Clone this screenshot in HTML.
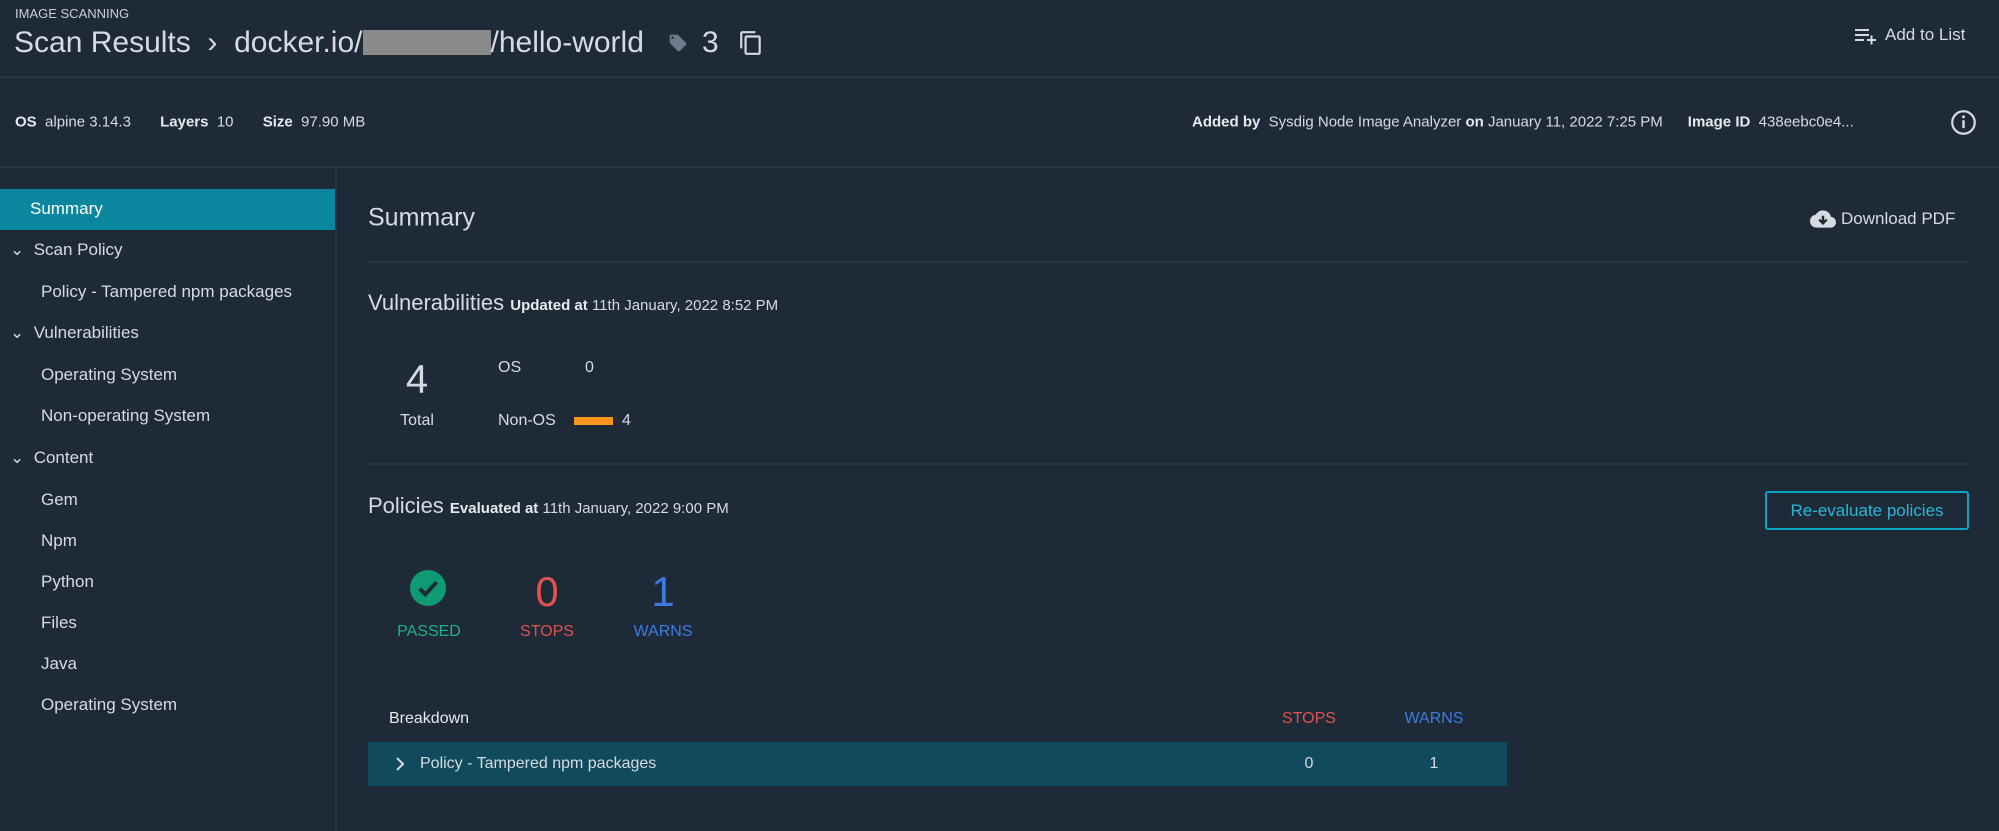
<!DOCTYPE html>
<html><head><meta charset="utf-8"><style>
*{margin:0;padding:0;box-sizing:border-box}
body{width:1999px;height:831px;background:#1f2a38;color:#d6dbe1;font-family:"Liberation Sans",sans-serif;position:relative;overflow:hidden}
.a{position:absolute;white-space:nowrap}
.line{position:absolute;height:2px;background:#283646}
b{font-weight:bold;color:#e6e9ed}
.side{font-size:17px;color:#d6dbe1}
.m{transform:translateY(-50%)}
.cm{transform:translate(-50%,-50%)}
</style></head><body>
<div class="a" style="left:15px;top:6px;font-size:13px;color:#c8ced6">IMAGE SCANNING</div>
<div class="a" style="left:14px;top:26px;font-size:30px;color:#d6dbe1;font-weight:300">Scan Results&nbsp; ›&nbsp; docker.io/<span style="display:inline-block;width:128px;height:25px;background:#8a8a8a;vertical-align:-3px"></span>/hello-world</div>
<svg class="a" style="left:668px;top:33px" width="20" height="20" viewBox="0 0 24 24"><path d="M21.4 11.6l-9-9C12 2.2 11.5 2 11 2H4c-1.1 0-2 .9-2 2v7c0 .6.2 1.1.6 1.4l9 9c.4.4.9.6 1.4.6s1-.2 1.4-.6l7-7c.4-.4.6-.9.6-1.4s-.2-1-.6-1.4zM5.5 7C4.7 7 4 6.3 4 5.5S4.7 4 5.5 4 7 4.7 7 5.5 6.3 7 5.5 7z" fill="#6d7a8a"/></svg>
<div class="a" style="left:702px;top:26px;font-size:30px;font-weight:300">3</div>
<svg class="a" style="left:738px;top:29px" width="26" height="28" viewBox="0 0 24 24"><path d="M16 1H4c-1.1 0-2 .9-2 2v14h2V3h12V1zm3 4H8c-1.1 0-2 .9-2 2v14c0 1.1.9 2 2 2h11c1.1 0 2-.9 2-2V7c0-1.1-.9-2-2-2zm0 16H8V7h11v14z" fill="#d6dbe1"/></svg>
<svg class="a" style="left:1854px;top:26px" width="24" height="20" viewBox="0 0 24 20"><path d="M1 4h14M1 9h14M1 14h9M13 14h9M17.5 9.5v9" stroke="#d6dbe1" stroke-width="2"/></svg>
<div class="a" style="left:1885px;top:25px;font-size:17px">Add to List</div>
<div class="line" style="left:0;top:76px;width:1999px"></div>
<div class="a m" style="left:15px;top:122px;font-size:15px"><b>OS</b>&nbsp; alpine 3.14.3 &nbsp; &nbsp; &nbsp; <b>Layers</b>&nbsp; 10 &nbsp; &nbsp; &nbsp; <b>Size</b>&nbsp; 97.90 MB</div>
<div class="a m" style="left:1192px;top:122px;font-size:15px"><b>Added by</b>&nbsp; Sysdig Node Image Analyzer <b>on</b> January 11, 2022 7:25 PM &nbsp; &nbsp; &nbsp;<b>Image ID</b>&nbsp; 438eebc0e4...</div>
<svg class="a" style="left:1950px;top:109px" width="27" height="27" viewBox="0 0 24 24"><circle cx="12" cy="12" r="10" fill="none" stroke="#d6dbe1" stroke-width="2"/><path d="M12 10v7" stroke="#d6dbe1" stroke-width="2.2"/><circle cx="12" cy="7" r="1.3" fill="#d6dbe1"/></svg>
<div class="line" style="left:0;top:166px;width:1999px"></div>
<div class="a" style="left:335px;top:167px;width:2px;height:664px;background:#283646"></div>
<div class="a" style="left:0;top:189px;width:335px;height:41px;background:#0b869f"></div>
<div class="a side m" style="left:30px;top:209px;color:#fff">Summary</div>
<div class="a side m" style="left:10px;top:250px">⌄&nbsp; Scan Policy</div>
<div class="a side m" style="left:41px;top:292px">Policy - Tampered npm packages</div>
<div class="a side m" style="left:10px;top:333px">⌄&nbsp; Vulnerabilities</div>
<div class="a side m" style="left:41px;top:375px">Operating System</div>
<div class="a side m" style="left:41px;top:416px">Non-operating System</div>
<div class="a side m" style="left:10px;top:458px">⌄&nbsp; Content</div>
<div class="a side m" style="left:41px;top:500px">Gem</div>
<div class="a side m" style="left:41px;top:541px">Npm</div>
<div class="a side m" style="left:41px;top:582px">Python</div>
<div class="a side m" style="left:41px;top:623px">Files</div>
<div class="a side m" style="left:41px;top:664px">Java</div>
<div class="a side m" style="left:41px;top:705px">Operating System</div>

<div class="a m" style="left:368px;top:218px;font-size:25px;font-weight:300">Summary</div>
<svg class="a" style="left:1810px;top:208px" width="26" height="22" viewBox="0 0 24 20"><path d="M19.4 8C18.7 4.6 15.7 2 12 2 9.1 2 6.6 3.6 5.4 6 2.3 6.4 0 8.9 0 12c0 3.3 2.7 6 6 6h13c2.8 0 5-2.2 5-5 0-2.6-2.1-4.8-4.6-5z" fill="#d6dbe1"/><path d="M12 7v6M8.5 10.5 12 14l3.5-3.5" stroke="#1f2a38" stroke-width="2.2" fill="none"/></svg>
<div class="a m" style="left:1841px;top:219px;font-size:17px">Download PDF</div>
<div class="line" style="left:368px;top:261px;width:1601px"></div>
<div class="a m" style="left:368px;top:303px;font-size:22px;font-weight:300">Vulnerabilities <span style="font-size:15px"><b>Updated at</b> 11th January, 2022 8:52 PM</span></div>
<div class="a cm" style="left:417px;top:380px;font-size:40px;font-weight:300">4</div>
<div class="a cm" style="left:417px;top:421px;font-size:16px">Total</div>
<div class="a m" style="left:498px;top:368px;font-size:16px">OS</div>
<div class="a m" style="left:585px;top:368px;font-size:16px">0</div>
<div class="a m" style="left:498px;top:421px;font-size:16px">Non-OS</div>
<div class="a" style="left:574px;top:417px;width:39px;height:8px;background:#f7941d"></div>
<div class="a m" style="left:622px;top:421px;font-size:16px">4</div>
<div class="line" style="left:368px;top:463px;width:1601px"></div>
<div class="a m" style="left:368px;top:506px;font-size:22px;font-weight:300">Policies <span style="font-size:15px"><b>Evaluated at</b> 11th January, 2022 9:00 PM</span></div>
<div class="a" style="left:1765px;top:491px;width:204px;height:39px;border:2px solid #0ba5c4;border-radius:3px;color:#27b8d6;font-size:17px;text-align:center;line-height:35px">Re-evaluate policies</div>
<svg class="a" style="left:410px;top:570px" width="36" height="36" viewBox="0 0 24 24"><circle cx="12" cy="12" r="12" fill="#0f9a73"/><path d="M6.5 12.5l3.7 3.7 7.5-8" stroke="#1f2a38" stroke-width="2.6" fill="none"/></svg>
<div class="a cm" style="left:429px;top:632px;font-size:16px;color:#1bb285">PASSED</div>
<div class="a cm" style="left:547px;top:592px;font-size:42px;font-weight:300;color:#e0524f">0</div>
<div class="a cm" style="left:547px;top:632px;font-size:16px;color:#e0524f">STOPS</div>
<div class="a cm" style="left:663px;top:592px;font-size:42px;font-weight:300;color:#3d7be0">1</div>
<div class="a cm" style="left:663px;top:632px;font-size:16px;color:#3d7be0">WARNS</div>
<div class="a m" style="left:389px;top:719px;font-size:16px;color:#e6e9ed">Breakdown</div>
<div class="a cm" style="left:1309px;top:719px;font-size:16px;color:#e0524f">STOPS</div>
<div class="a cm" style="left:1434px;top:719px;font-size:16px;color:#3d7be0">WARNS</div>
<div class="a" style="left:368px;top:742px;width:1139px;height:44px;background:#124a5d"></div>
<svg class="a" style="left:394px;top:755px" width="12" height="18" viewBox="0 0 12 18"><path d="M3 3l6 6-6 6" stroke="#d6dbe1" stroke-width="2" fill="none"/></svg>
<div class="a m" style="left:420px;top:764px;font-size:16px">Policy - Tampered npm packages</div>
<div class="a cm" style="left:1309px;top:764px;font-size:16px">0</div>
<div class="a cm" style="left:1434px;top:764px;font-size:16px">1</div>
</body></html>
